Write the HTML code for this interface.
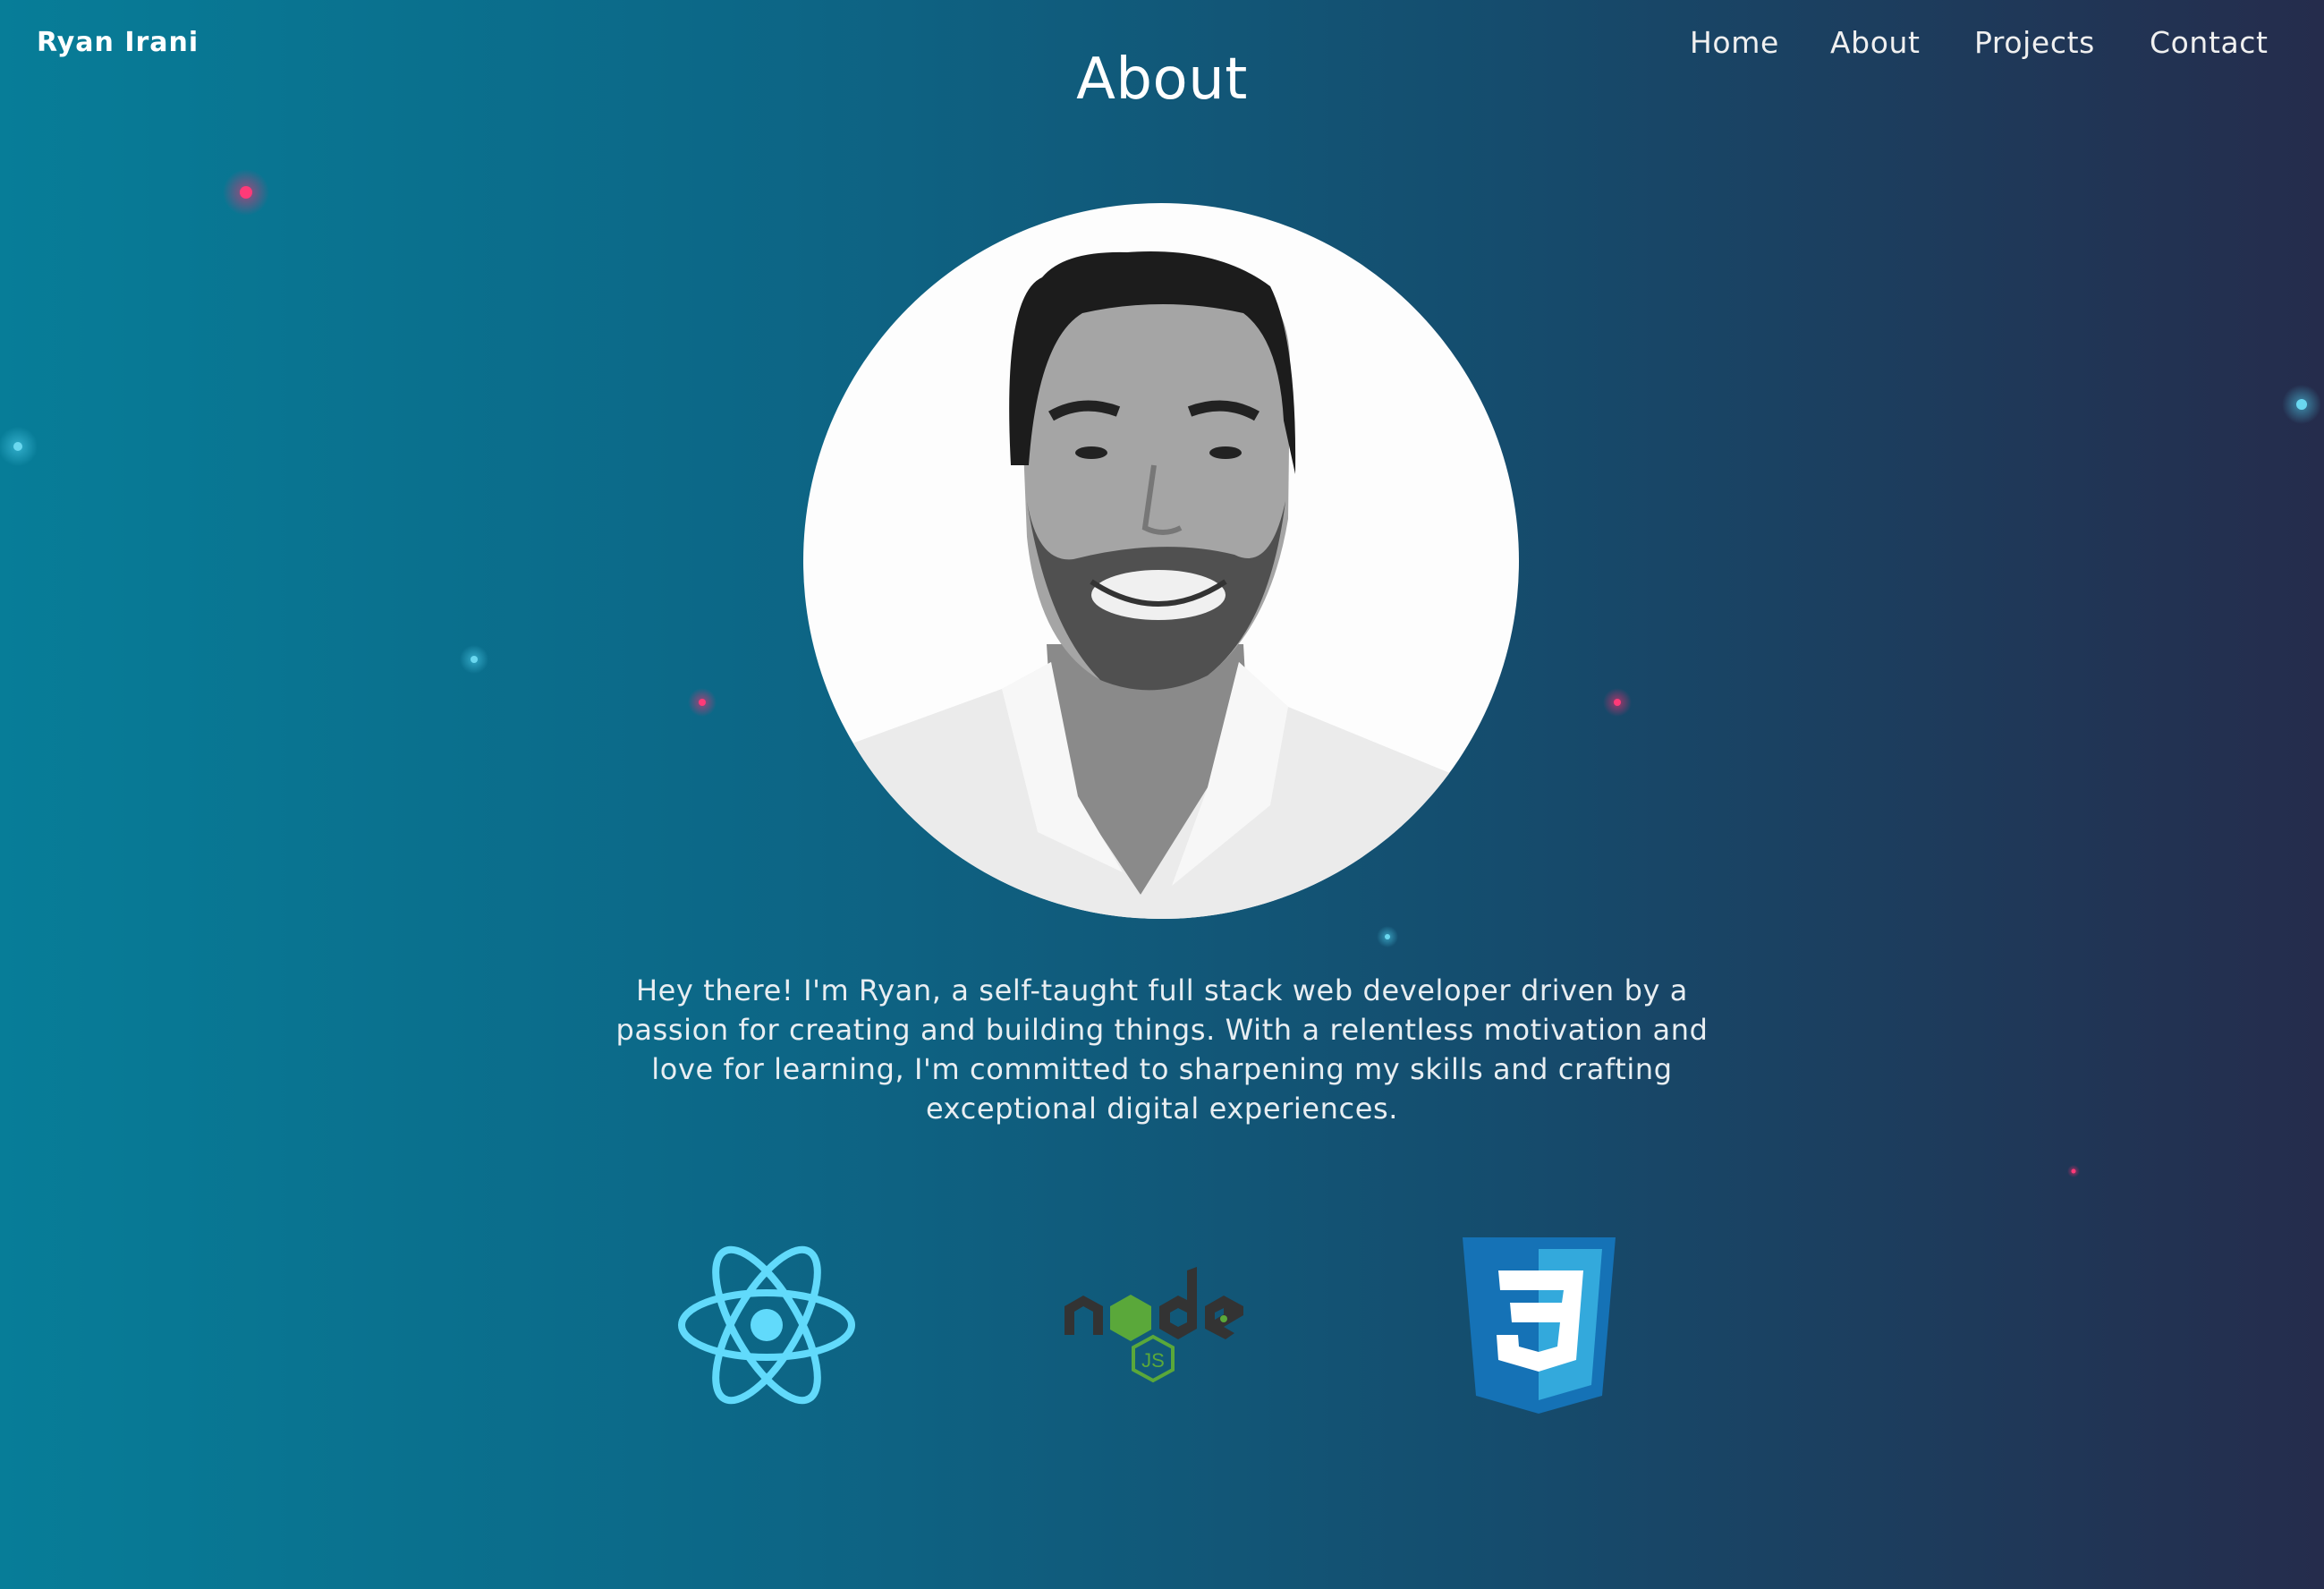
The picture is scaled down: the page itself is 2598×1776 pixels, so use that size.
<!DOCTYPE html>
<html><head><meta charset="utf-8"><style>
html,body{margin:0;padding:0;}
body{width:2598px;height:1776px;overflow:hidden;position:relative;
background:linear-gradient(90deg,#077d98 0%,#0d6585 35%,#154c6d 65%,#252c4c 100%);
font-family:"DejaVu Sans","Liberation Sans",sans-serif;color:#fff;}
.logo{position:absolute;left:41px;top:30px;font-size:30px;font-weight:bold;letter-spacing:1px;}
.nav{position:absolute;top:28px;font-size:33px;letter-spacing:0.6px;color:#f0f0f0;}
h1{position:absolute;left:0;width:2598px;text-align:center;top:52px;margin:0;font-weight:normal;font-size:64px;letter-spacing:0.5px;}
p{position:absolute;left:669px;width:1260px;top:1085px;margin:0;text-align:center;font-size:32px;line-height:44px;letter-spacing:0.6px;color:#e8eef2;}
svg{position:absolute;left:0;top:0;}
</style></head><body>
<svg width="2598" height="1776" viewBox="0 0 2598 1776">
<defs>
<clipPath id="c"><circle cx="1298" cy="627" r="400"/></clipPath>
<radialGradient id="pg"><stop offset="0" stop-color="#ff2d6e" stop-opacity="0.6"/><stop offset="1" stop-color="#ff2d6e" stop-opacity="0"/></radialGradient>
<radialGradient id="tg"><stop offset="0" stop-color="#4fd0ee" stop-opacity="0.6"/><stop offset="1" stop-color="#4fd0ee" stop-opacity="0"/></radialGradient>
</defs>
<circle cx="275" cy="215" r="26" fill="url(#pg)"/><circle cx="275" cy="215" r="7" fill="#ff3a78"/>
<circle cx="20" cy="499" r="22" fill="url(#tg)"/><circle cx="20" cy="499" r="5" fill="#6ad8f0"/>
<circle cx="530" cy="737" r="16" fill="url(#tg)"/><circle cx="530" cy="737" r="4" fill="#6ad8f0"/>
<circle cx="785" cy="785" r="16" fill="url(#pg)"/><circle cx="785" cy="785" r="4" fill="#ff3a78"/>
<circle cx="1808" cy="785" r="16" fill="url(#pg)"/><circle cx="1808" cy="785" r="4" fill="#ff3a78"/>
<circle cx="1551" cy="1047" r="12" fill="url(#tg)"/><circle cx="1551" cy="1047" r="3" fill="#6ad8f0"/>
<circle cx="2573" cy="452" r="22" fill="url(#tg)"/><circle cx="2573" cy="452" r="6" fill="#6ad8f0"/>
<circle cx="2318" cy="1309" r="7" fill="url(#pg)"/><circle cx="2318" cy="1309" r="2.5" fill="#ff3a78"/>
<g clip-path="url(#c)">
<rect x="890" y="220" width="820" height="820" fill="#fdfdfd"/>
<path d="M1170 720 L1390 720 L1400 900 L1275 1000 L1180 880 Z" fill="#8a8a8a"/>
<path d="M900 850 L1120 770 L1175 740 L1195 880 L1275 1000 L1350 880 L1385 740 L1440 790 L1660 880 L1720 1040 L880 1040 Z" fill="#ebebeb"/>
<path d="M1120 770 L1175 740 L1205 890 L1255 975 L1160 930 Z" fill="#f7f7f7"/>
<path d="M1385 740 L1440 790 L1420 900 L1310 990 L1350 880 Z" fill="#f7f7f7"/>
<path d="M1140 400 Q1140 330 1200 320 L1400 320 Q1445 340 1442 420 L1440 580 Q1420 700 1350 755 Q1290 780 1230 760 Q1160 720 1148 600 Z" fill="#a5a5a5"/>
<path d="M1148 560 Q1170 700 1230 760 Q1290 785 1350 755 Q1420 700 1437 560 Q1420 640 1380 620 Q1300 600 1200 625 Q1160 630 1148 560 Z" fill="#505050"/>
<ellipse cx="1295" cy="665" rx="75" ry="28" fill="#f0f0f0"/>
<path d="M1220 650 Q1295 700 1370 650" stroke="#333" stroke-width="6" fill="none"/>
<path d="M1175 465 Q1210 445 1250 460" stroke="#222" stroke-width="12" fill="none"/>
<path d="M1330 460 Q1370 445 1405 465" stroke="#222" stroke-width="12" fill="none"/>
<ellipse cx="1220" cy="506" rx="18" ry="7" fill="#222"/>
<ellipse cx="1370" cy="506" rx="18" ry="7" fill="#222"/>
<path d="M1290 520 L1280 590 Q1300 600 1320 590" stroke="#777" stroke-width="6" fill="none"/>
<path d="M1130 520 Q1120 330 1165 310 Q1190 280 1260 282 Q1360 275 1420 320 Q1450 380 1448 530 L1435 470 Q1430 380 1390 350 Q1300 330 1210 350 Q1160 380 1150 520 Z" fill="#1c1c1c"/>
</g>
<g transform="translate(857 1481)" fill="none" stroke="#61dafb" stroke-width="8">
<ellipse rx="95" ry="36"/>
<ellipse rx="95" ry="36" transform="rotate(60)"/>
<ellipse rx="95" ry="36" transform="rotate(120)"/>
<circle r="18" fill="#61dafb" stroke="none"/>
</g>
<g>
<path d="M1190 1460 L1211 1448 L1233 1460 L1233 1492 L1222 1492 L1222 1466 L1211 1460 L1201 1466 L1201 1492 L1190 1492 Z" fill="#333"/>
<polygon points="1264,1447 1287,1460 1287,1486 1264,1499 1241,1486 1241,1460" fill="#5aa83a"/>
<path d="M1327 1420 L1338 1416 L1338 1485 L1317 1497 L1296 1485 L1296 1460 L1317 1448 L1327 1453 Z M1317 1462 L1308 1467 L1308 1478 L1317 1483 L1327 1478 L1327 1467 Z" fill="#333" fill-rule="evenodd"/>
<path d="M1347 1460 L1368 1448 L1390 1460 L1390 1470 L1368 1483 L1380 1490 L1370 1497 L1347 1485 Z M1358 1467 L1358 1475 L1368 1469 L1368 1462 Z" fill="#333" fill-rule="evenodd"/>
<circle cx="1368" cy="1474" r="4" fill="#5aa83a"/>
<polygon points="1289,1494 1311,1506 1311,1531 1289,1543 1267,1531 1267,1506" fill="none" stroke="#5aa83a" stroke-width="4"/>
<text x="1289" y="1528" font-size="22" fill="#5aa83a" text-anchor="middle" font-family="Liberation Sans,sans-serif">JS</text>
</g>
<g>
<path d="M1635 1383 L1806 1383 L1791 1560 L1720 1580 L1650 1560 Z" fill="#1572b6"/>
<path d="M1720 1396 L1791 1396 L1779 1548 L1720 1565 Z" fill="#33a9dc"/>
<path d="M1675 1420 L1770 1420 L1762 1520 L1720 1533 L1675 1520 L1673 1492 L1697 1492 L1698 1505 L1720 1511 L1741 1505 L1744 1478 L1690 1478 L1688 1456 L1746 1456 L1748 1442 L1677 1442 Z" fill="#fff"/>
</g>
</svg>
<div class="logo">Ryan Irani</div>
<div class="nav" style="left:1889px">Home</div>
<div class="nav" style="left:2046px">About</div>
<div class="nav" style="left:2207px">Projects</div>
<div class="nav" style="left:2403px">Contact</div>
<h1>About</h1>
<p>Hey there! I'm Ryan, a self-taught full stack web developer driven by a passion for creating and building things. With a relentless motivation and love for learning, I'm committed to sharpening my skills and crafting exceptional digital experiences.</p>
</body></html>
